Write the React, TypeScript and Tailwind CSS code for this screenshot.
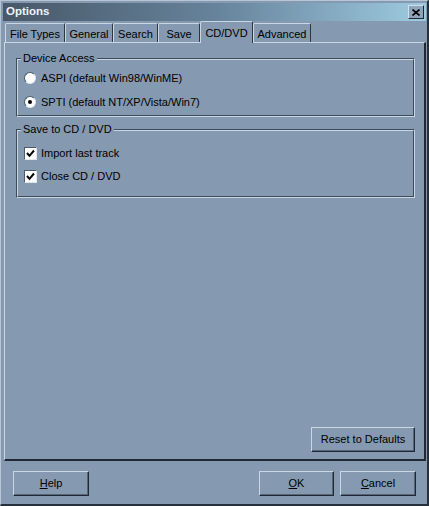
import React from "react";

function Tab({ label, width, active }: { label: string; width: string; active?: boolean }) {
  if (active) {
    return (
      <div
        className={`relative z-10 ${width} h-[22px] -mb-[1px] bg-[#8599b1] border-t border-l border-r border-t-[#c9d6e3] border-l-[#c9d6e3] border-r-[#2c3745] rounded-t-[2px] flex items-center justify-center pt-[1px]`}
      >
        {label}
      </div>
    );
  }
  return (
    <div
      className={`${width} h-[19px] border-t border-l border-r border-t-[#c9d6e3] border-l-[#c9d6e3] border-r-[#2c3745] rounded-t-[2px] flex items-center justify-center pt-[3px]`}
    >
      {label}
    </div>
  );
}

function GroupBox({ title, height, children }: { title: string; height: string; children: React.ReactNode }) {
  return (
    <div className={`relative w-[399px] ${height} border border-t-[#3d4a5b] border-l-[#3d4a5b] border-r-[#c9d6e3] border-b-[#c9d6e3]`}>
      <div className="h-full border border-t-[#c9d6e3] border-l-[#c9d6e3] border-r-[#3d4a5b] border-b-[#3d4a5b]">
        {children}
      </div>
      <span className="absolute -top-[8px] left-[4px] px-[2px] bg-[#8599b1] leading-[14px]">{title}</span>
    </div>
  );
}

function Radio({ label, checked }: { label: string; checked?: boolean }) {
  return (
    <div className="flex items-center h-[16px] gap-[5px]">
      <div className="w-[12px] h-[12px] rounded-full bg-white border border-t-[#4b5a6c] border-l-[#4b5a6c] border-r-[#dfe7ef] border-b-[#dfe7ef] flex items-center justify-center">
        {checked && <div className="w-[4px] h-[4px] rounded-full bg-black" />}
      </div>
      <span>{label}</span>
    </div>
  );
}

function Check({ label }: { label: string }) {
  return (
    <div className="flex items-center h-[16px] gap-[4px]">
      <div className="w-[13px] h-[13px] bg-white border border-t-[#4b5a6c] border-l-[#4b5a6c] border-r-[#dfe7ef] border-b-[#dfe7ef] flex items-center justify-center">
        <svg width="9" height="9" viewBox="0 0 9 9">
          <path d="M1 4 L3.5 6.8 L8 1.5" stroke="#000" strokeWidth="2" fill="none" />
        </svg>
      </div>
      <span>{label}</span>
    </div>
  );
}

function Button({ children, className }: { children: React.ReactNode; className?: string }) {
  return (
    <div
      className={`h-[25px] flex items-center justify-center border border-t-[#c9d6e3] border-l-[#c9d6e3] border-r-[#1f2833] border-b-[#1f2833] shadow-[inset_-1px_-1px_0_#55657a] ${className ?? ""}`}
    >
      {children}
    </div>
  );
}

export default function App() {
  return (
    <div
      className="w-[429px] h-[506px] bg-[#8599b1] text-black text-[11px] flex flex-col border-t border-l border-t-[#b7c6d6] border-l-[#b7c6d6] border-r-2 border-b-2 border-r-[#26303c] border-b-[#26303c] pt-[2px] pl-[3px] pr-[1px]"
      style={{ fontFamily: '"Liberation Sans", Arial, sans-serif' }}
    >
      {/* title bar */}
      <div className="-ml-[1px] h-[18px] flex items-center justify-between pl-[3px] pr-[2px] bg-gradient-to-r from-[#485869] via-[#66839b] to-[#9ecbe0]">
        <span className="font-bold text-[#eef3f8] text-[11.5px]">Options</span>
        <div className="w-[16px] h-[14px] bg-[#8fa4bb] border border-t-[#d3dfea] border-l-[#d3dfea] border-r-[#1f2833] border-b-[#1f2833] flex items-center justify-center">
          <svg width="8" height="7" viewBox="0 0 8 7">
            <path d="M0.5 0.5 L7.5 6.5 M7.5 0.5 L0.5 6.5" stroke="#000" strokeWidth="1.6" />
          </svg>
        </div>
      </div>

      {/* tabs */}
      <div className="h-[21px] flex items-end pl-[1px]">
        <Tab label="File Types" width="w-[60px]" />
        <Tab label="General" width="w-[48px]" />
        <Tab label="Search" width="w-[45px]" />
        <Tab label="Save" width="w-[42px]" />
        <Tab label="CD/DVD" width="w-[53px]" active />
        <Tab label="Advanced" width="w-[58px]" />
      </div>

      {/* panel */}
      <div className="h-[419px] flex flex-col border-t border-l border-t-[#c9d6e3] border-l-[#c9d6e3] border-r-2 border-b-2 border-r-[#1f2833] border-b-[#1f2833] pl-[11px] pt-[15px]">
        <GroupBox title="Device Access" height="h-[59px]">
          <div className="flex flex-col gap-[8px] pt-[10px] pl-[6px]">
            <Radio label="ASPI (default Win98/WinME)" />
            <Radio label="SPTI (default NT/XP/Vista/Win7)" checked />
          </div>
        </GroupBox>
        <div className="h-[12px]" />
        <GroupBox title="Save to CD / DVD" height="h-[69px]">
          <div className="flex flex-col gap-[7px] pt-[14px] pl-[6px]">
            <Check label="Import last track" />
            <Check label="Close CD / DVD" />
          </div>
        </GroupBox>
        <div className="mt-auto self-end mr-[9px] mb-[7px]">
          <Button className="w-[104px]">Reset to Defaults</Button>
        </div>
      </div>

      {/* footer */}
      <div className="flex-1 flex items-start pt-[10px] pl-[9px] pr-[10px]">
        <Button className="w-[76px]">
          <span>
            <span className="underline">H</span>elp
          </span>
        </Button>
        <div className="flex-1" />
        <Button className="w-[75px]">
          <span>
            <span className="underline">O</span>K
          </span>
        </Button>
        <Button className="w-[76px] ml-[6px]">
          <span>
            <span className="underline">C</span>ancel
          </span>
        </Button>
      </div>
    </div>
  );
}
